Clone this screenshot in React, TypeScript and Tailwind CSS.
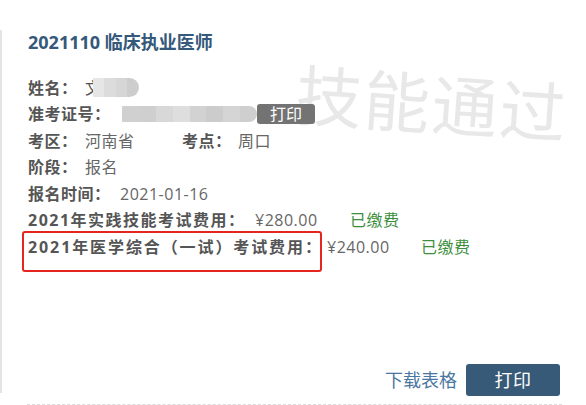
const labelCls = 'shrink-0 whitespace-nowrap font-bold text-[#555]';
const valueCls = 'shrink-0 whitespace-nowrap text-[#666]';

function Mosaic({ cells, className }: { cells: string[]; className: string }) {
  return (
    <div className={`flex overflow-hidden ${className}`}>
      {cells.map((c, i) => (
        <div key={i} className="flex-1 h-full" style={{ backgroundColor: c }} />
      ))}
    </div>
  );
}

export default function App() {
  return (
    <div className="relative w-[586px] h-[405px] overflow-hidden bg-white font-['Open_Sans','Noto_Sans_CJK_SC',sans-serif] text-[16px] tracking-[0.5px]">
      {/* watermark */}
      <div className="absolute left-[296px] top-[70px] rotate-[4deg] text-[66px] leading-none tracking-[2px] text-[#e8e8e8] select-none">
        技能通过
      </div>

      <div className="relative pt-[30px]">
        <div className="flex flex-col h-[363px] border-l-2 border-[#e4e4e4] pl-[26px] pr-[26px]">
          <h2 className="h-[24px] leading-[24px] text-[18px] tracking-normal font-bold text-[#34597a]">2021110 临床执业医师</h2>

          <div className="mt-[21px] flex flex-col">
            <div className="h-[25px] flex items-center">
              <span className={`w-[57px] ${labelCls}`}>姓名：</span>
              <span className="text-[#555]">文</span>
              <Mosaic className="-ml-[9px] w-[46px] h-[19px] rounded-r-full" cells={['#e6e6e6', '#dcdcdc', '#d6d6d6', '#cdcdcd']} />
            </div>
            <div className="h-[27px] flex items-center">
              <span className={`w-[94px] ${labelCls}`}>准考证号：</span>
              <Mosaic
                className="w-[135px] h-[16px] rounded-r-full"
                cells={['#d0d0d0', '#cfcfcf', '#d8d8d8', '#dedede', '#d2d2d2', '#cccccc', '#d5d5d5', '#cfcfcf']}
              />
              <span className="h-[20px] w-[58px] rounded-[3px] bg-[#737373] text-white leading-[20px] text-center tracking-normal">
                打印
              </span>
            </div>
            <div className="h-[27px] flex items-center">
              <span className={`w-[57px] ${labelCls}`}>考区：</span>
              <span className={`w-[97px] ${valueCls}`}>河南省</span>
              <span className={`w-[56px] ${labelCls}`}>考点：</span>
              <span className={valueCls}>周口</span>
            </div>
            <div className="h-[26.5px] flex items-center">
              <span className={`w-[57px] ${labelCls}`}>阶段：</span>
              <span className={valueCls}>报名</span>
            </div>
            <div className="h-[26.5px] flex items-center">
              <span className={`w-[92px] ${labelCls}`}>报名时间：</span>
              <span className={valueCls}>2021-01-16</span>
            </div>
            <div className="h-[26.5px] flex items-center">
              <span className={`w-[227px] tracking-[1.5px] ${labelCls}`}>2021年实践技能考试费用：</span>
              <span className={`w-[95px] ${valueCls}`}>¥280.00</span>
              <span className="text-[#3d8f3d]">已缴费</span>
            </div>
            <div className="h-[26.5px] flex items-center">
              <span className={`w-[299px] tracking-[1.9px] ${labelCls}`}>2021年医学综合（一试）考试费用：</span>
              <span className={`w-[94px] ${valueCls}`}>¥240.00</span>
              <span className="text-[#3d8f3d]">已缴费</span>
            </div>
          </div>

          <div className="mt-auto -mb-[3px] flex items-center justify-end gap-[9px]">
            <a className="text-[18px] tracking-normal text-[#4a77a0]">下载表格</a>
            <button className="w-[94px] h-[32px] rounded-[3px] bg-[#375a78] text-white text-[18px]">打印</button>
          </div>
        </div>
      </div>

      <div className="mt-[11px] ml-[27px] w-[535px] border-t border-dashed border-[#dcdcdc]" />

      {/* annotation box */}
      <div className="absolute left-[22px] top-[231px] w-[300px] h-[41px] border-2 border-[#e5261e] rounded-[3px]" />
    </div>
  );
}
